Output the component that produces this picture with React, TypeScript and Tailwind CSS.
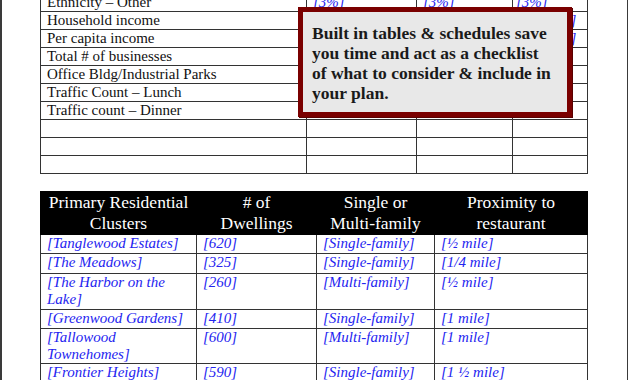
const topRows = [
  { label: 'Ethnicity – Other', a: '[3%]', b: '[3%]', c: '[3%]' },
  { label: 'Household income', a: '[$52,418]', b: '[$49,730]', c: '[$46,318]' },
  { label: 'Per capita income', a: '[$27,104]', b: '[$25,660]', c: '[$24,915]' },
  { label: 'Total # of businesses', a: '[1,240]', b: '[980]', c: '[1,105]' },
  { label: 'Office Bldg/Industrial Parks', a: '[6]', b: '[4]', c: '[5]' },
  { label: 'Traffic Count – Lunch', a: '[18,000 cars]', b: '[12,500]', c: '[14,200]' },
  { label: 'Traffic count – Dinner', a: '[22,000 cars]', b: '[11]', c: '[9,80]' },
  { label: '', a: '', b: '', c: '' },
  { label: '', a: '', b: '', c: '' },
  { label: '', a: '', b: '', c: '' },
];

const clusters = [
  { name: ['[Tanglewood Estates]'], count: '[620]', kind: '[Single-family]', near: '[½ mile]', h: 'h-[19px]' },
  { name: ['[The Meadows]'], count: '[325]', kind: '[Single-family]', near: '[1/4 mile]', h: 'h-[20px]' },
  { name: ['[The Harbor on the', 'Lake]'], count: '[260]', kind: '[Multi-family]', near: '[½ mile]', h: 'h-[36px]' },
  { name: ['[Greenwood Gardens]'], count: '[410]', kind: '[Single-family]', near: '[1 mile]', h: 'h-[19px]' },
  { name: ['[Tallowood', 'Townehomes]'], count: '[600]', kind: '[Multi-family]', near: '[1 mile]', h: 'h-[35px]' },
  { name: ['[Frontier Heights]'], count: '[590]', kind: '[Single-family]', near: '[1 ½ mile]', h: 'h-[19px]' },
];

const serif = { fontFamily: '"Liberation Serif", "Times New Roman", serif' };

function Callout() {
  return (
    <div className="absolute left-[296px] top-[7px] w-[274px] h-[110px] border-[5px] border-[#7a0000] bg-[#e8e8e8] pl-[9px] pt-[11px] shadow-[1px_1px_0_#5a0000]">
      <p className="text-[17.5px] leading-[20px] font-bold text-[#1a1a1a] whitespace-nowrap">
        Built in tables &amp; schedules save
        <br />
        you time and act as a checklist
        <br />
        of what to consider &amp; include in
        <br />
        your plan.
      </p>
    </div>
  );
}

export default function App() {
  return (
    <div className="w-[630px] h-[380px] overflow-hidden bg-white" style={serif}>
      <div className="relative flow-root w-[628px] h-[380px] border-l-2 border-r border-[#3a3a3a]">
        <table className="ml-[38px] -mt-[7px] table-fixed border-collapse text-[15px] leading-[17px]">
          <colgroup>
            <col className="w-[266px]" />
            <col className="w-[110px]" />
            <col className="w-[96px]" />
            <col className="w-[75px]" />
          </colgroup>
          <tbody>
            {topRows.map((r, i) => (
              <tr key={i} className="h-[18px]">
                <td className="border border-[#333] px-[6px] py-0 text-[#111] whitespace-nowrap">{r.label}</td>
                <td className="border border-[#333] px-[6px] py-0 italic text-[#2424f0] whitespace-nowrap">{r.a}</td>
                <td className="border border-[#333] px-[6px] py-0 italic text-[#2424f0] whitespace-nowrap">{r.b}</td>
                <td className="border border-[#333] px-[3px] py-0 italic text-[#2424f0] whitespace-nowrap overflow-hidden">{r.c}</td>
              </tr>
            ))}
          </tbody>
        </table>

        <Callout />

        <table className="ml-[38px] mt-[17px] table-fixed border-collapse">
          <colgroup>
            <col className="w-[156px]" />
            <col className="w-[120px]" />
            <col className="w-[118px]" />
            <col className="w-[153px]" />
          </colgroup>
          <thead>
            <tr className="h-[41px] bg-black text-white text-[17.5px] leading-[21px]">
              <th className="font-normal px-0 py-0 border border-black whitespace-nowrap">
                Primary Residential
                <br />
                Clusters
              </th>
              <th className="font-normal px-0 py-0 border border-black">
                # of
                <br />
                Dwellings
              </th>
              <th className="font-normal px-0 py-0 border border-black">
                Single or
                <br />
                Multi-family
              </th>
              <th className="font-normal px-0 py-0 border border-black">
                Proximity to
                <br />
                restaurant
              </th>
            </tr>
          </thead>
          <tbody className="italic text-[#2424f0] text-[15px] leading-[17px]">
            {clusters.map((c) => (
              <tr key={c.count} className={c.h}>
                <td className="border border-[#333] pl-[6px] pr-1 py-0 align-top whitespace-nowrap">
                  {c.name.map((line, i) => (
                    <div key={i}>{line}</div>
                  ))}
                </td>
                <td className="border border-[#333] pl-[6px] pr-1 py-0 align-top">{c.count}</td>
                <td className="border border-[#333] pl-[6px] pr-1 py-0 align-top">{c.kind}</td>
                <td className="border border-[#333] pl-[6px] pr-1 py-0 align-top">{c.near}</td>
              </tr>
            ))}
          </tbody>
        </table>
      </div>
    </div>
  );
}
